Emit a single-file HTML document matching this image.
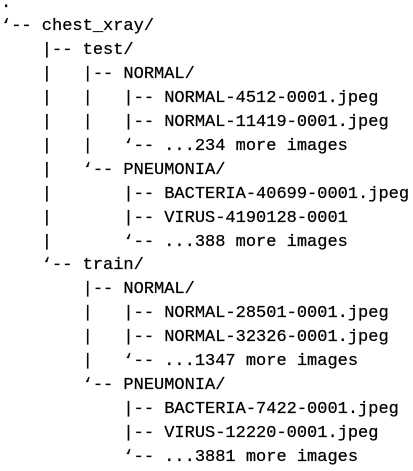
<!DOCTYPE html>
<html><head><meta charset="utf-8"><style>
html,body{margin:0;padding:0;background:#fff;width:413px;height:471px;overflow:hidden}
pre{margin:0;position:absolute;left:1px;top:-8.5px;font-family:"Liberation Mono",monospace;font-size:17px;line-height:23.9px;color:#000;-webkit-text-stroke:0.25px #000}
</style></head><body><pre>.
‘-- chest_xray/
    |-- test/
    |   |-- NORMAL/
    |   |   |-- NORMAL-4512-0001.jpeg
    |   |   |-- NORMAL-11419-0001.jpeg
    |   |   ‘-- ...234 more images
    |   ‘-- PNEUMONIA/
    |       |-- BACTERIA-40699-0001.jpeg
    |       |-- VIRUS-4190128-0001
    |       ‘-- ...388 more images
    ‘-- train/
        |-- NORMAL/
        |   |-- NORMAL-28501-0001.jpeg
        |   |-- NORMAL-32326-0001.jpeg
        |   ‘-- ...1347 more images
        ‘-- PNEUMONIA/
            |-- BACTERIA-7422-0001.jpeg
            |-- VIRUS-12220-0001.jpeg
            ‘-- ...3881 more images</pre></body></html>
